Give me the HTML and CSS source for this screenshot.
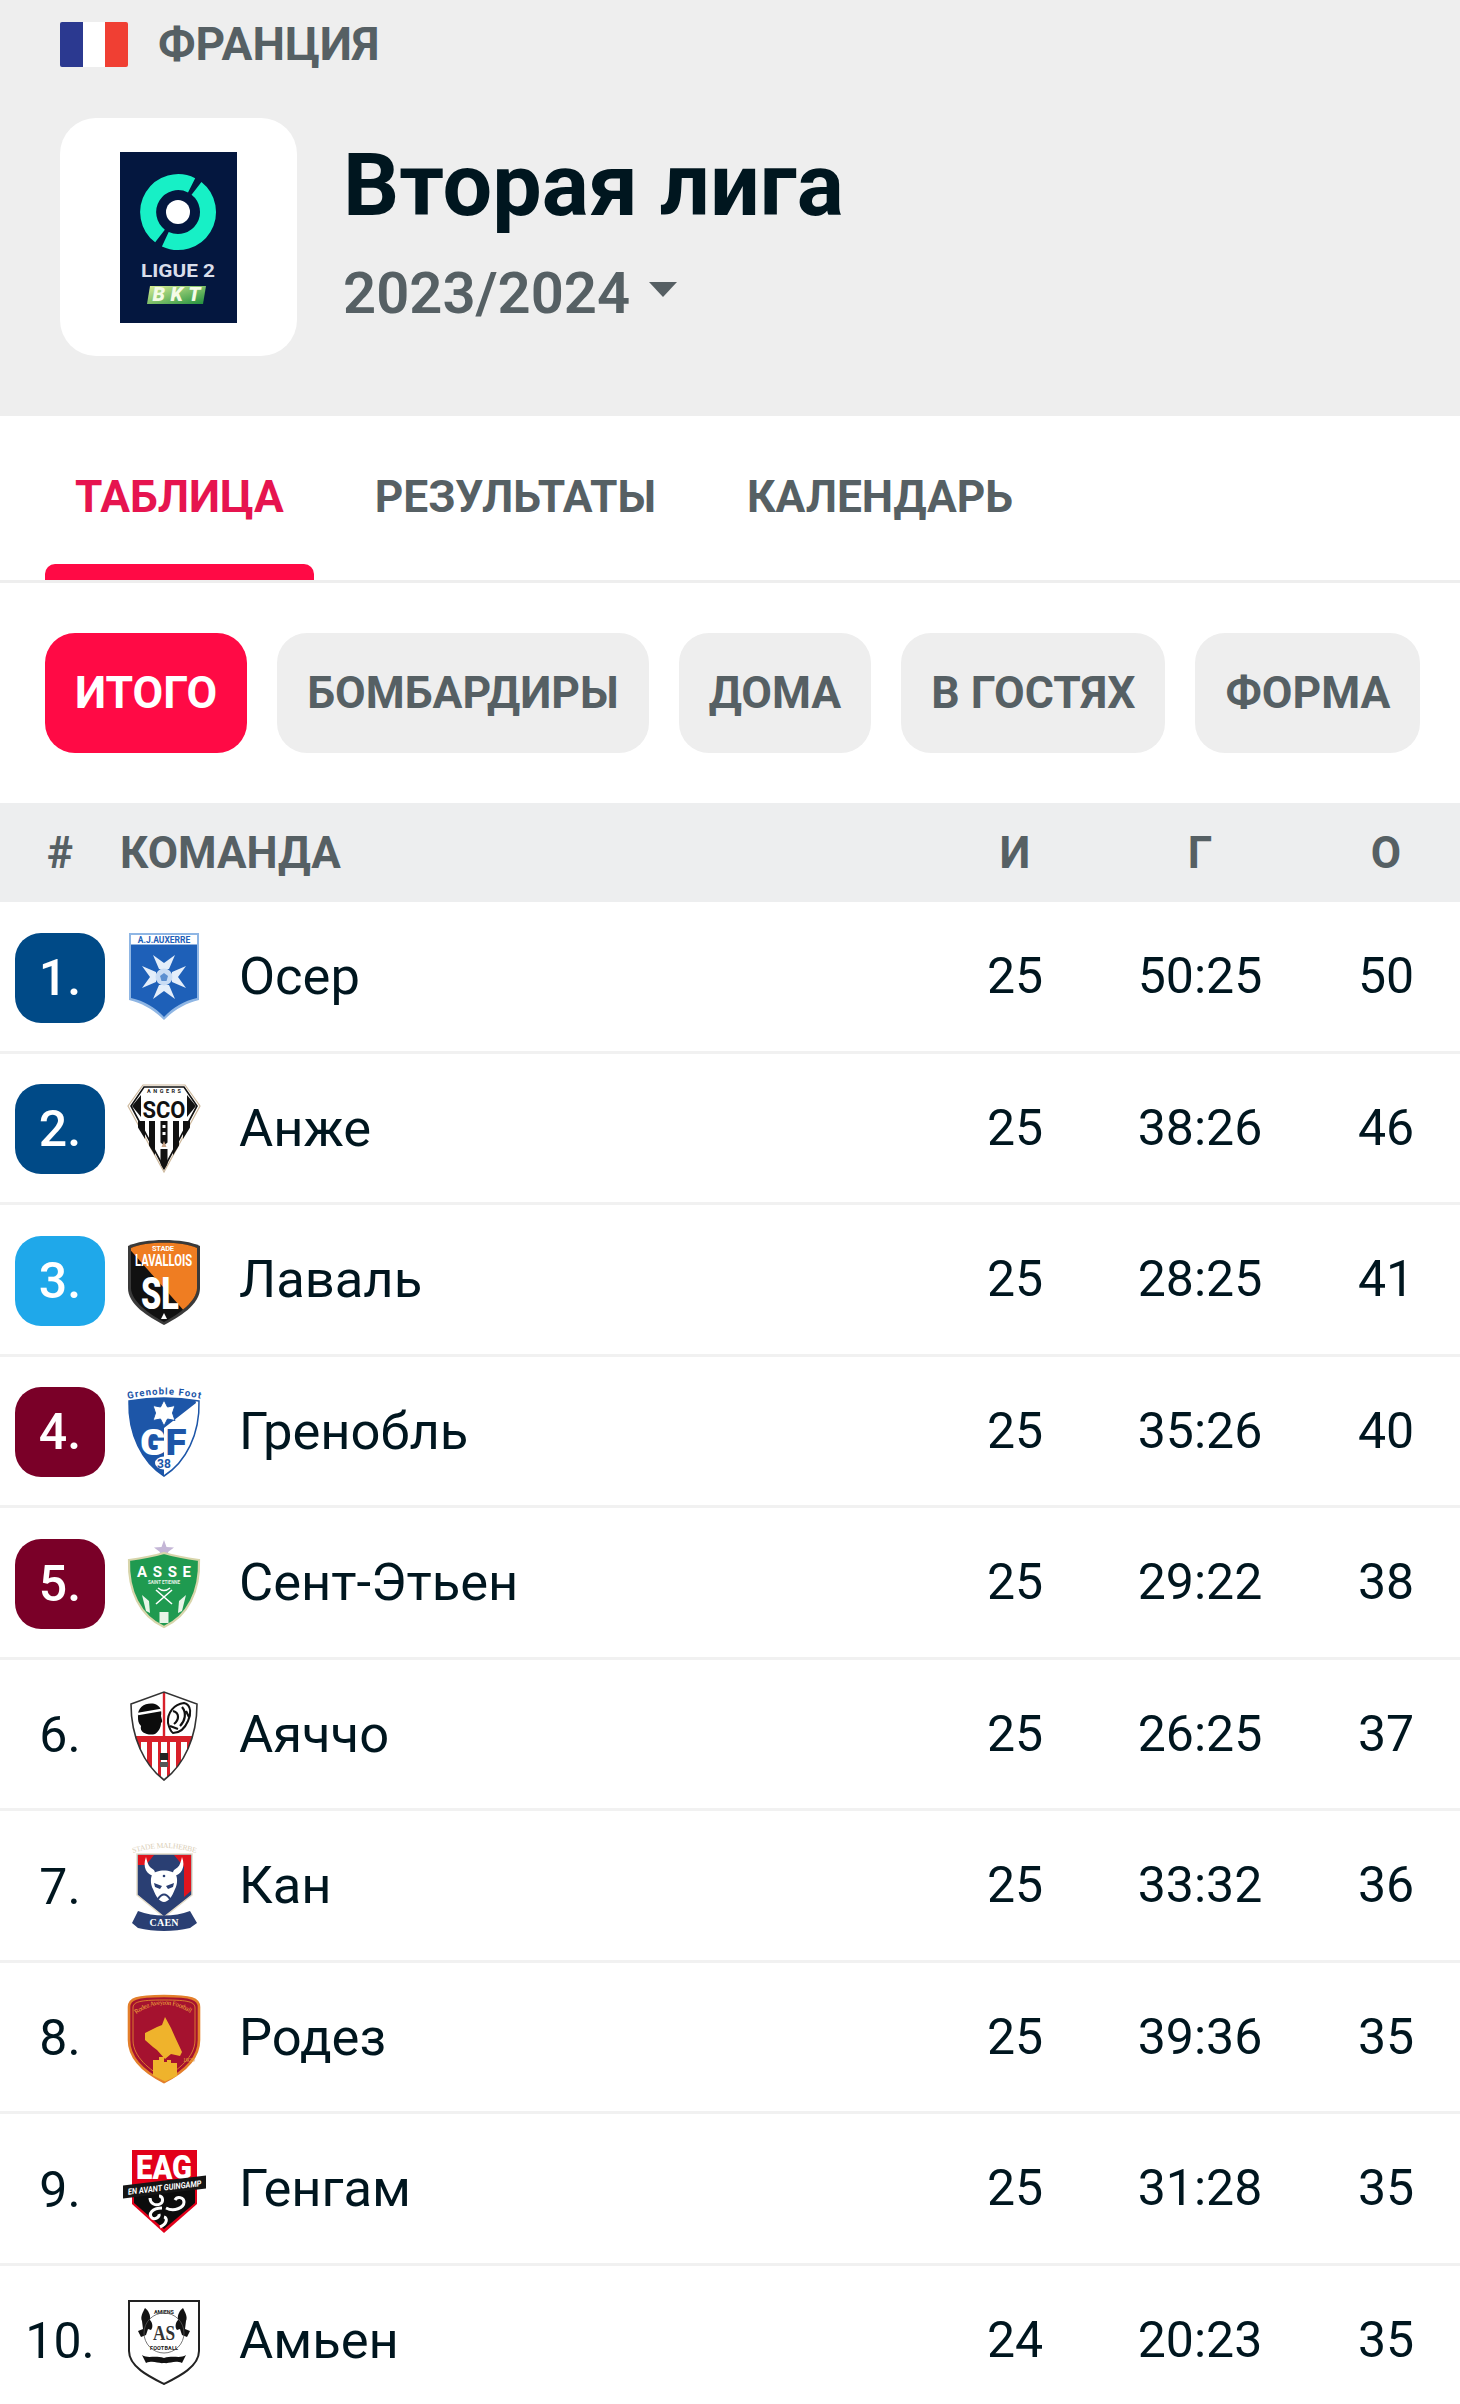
FILE: index.html
```html
<!DOCTYPE html>
<html lang="ru">
<head>
<meta charset="utf-8">
<title>Вторая лига</title>
<link rel="stylesheet" href="styles.css">
</head>
<body>
<div class="page">
  <header class="league">
    <div class="country">
      <div class="flag"><span class="flag-b"></span><span class="flag-w"></span><span class="flag-r"></span></div>
      <span class="country-name">ФРАНЦИЯ</span>
    </div>
    <div class="league-main">
      <div class="tile">
        <svg class="logo" viewBox="0 0 117 171" width="117" height="171">
          <defs><linearGradient id="bkt" x1="0" y1="0" x2="1" y2="1"><stop offset="0" stop-color="#dcef96"/><stop offset="1" stop-color="#1f8f3c"/></linearGradient></defs>
          <rect width="117" height="171" fill="#04173f"/>
          <path d="M71.6 33.3A30 30 0 0 0 40 84" fill="none" stroke="#17f0c6" stroke-width="16"/>
          <path d="M76.5 36.4A30 30 0 0 1 45.3 87.2" fill="none" stroke="#17f0c6" stroke-width="16"/>
          <circle cx="58" cy="60" r="12" fill="#fff"/>
          <text class="l2" x="58" y="125" text-anchor="middle" textLength="74" lengthAdjust="spacingAndGlyphs">LIGUE 2</text>
          <path d="M30 134H86L83 152H27Z" fill="url(#bkt)"/>
          <text class="bkt" x="56.5" y="149" text-anchor="middle" textLength="48">BKT</text>
        </svg>
      </div>
      <div class="league-text">
        <h1 class="title">Вторая лига</h1>
        <div class="season"><span>2023/2024</span>
          <svg class="caret" viewBox="0 0 28 15" width="28" height="15"><path d="M0 0H28L14 15Z" fill="#565f63"/></svg>
        </div>
      </div>
    </div>
  </header>

  <nav class="tabs">
    <div class="tab tab-active"><span class="tab-label">ТАБЛИЦА</span></div>
    <div class="tab"><span class="tab-label">РЕЗУЛЬТАТЫ</span></div>
    <div class="tab"><span class="tab-label">КАЛЕНДАРЬ</span></div>
  </nav>

  <div class="pills">
    <div class="pill pill-active">ИТОГО</div>
    <div class="pill">БОМБАРДИРЫ</div>
    <div class="pill">ДОМА</div>
    <div class="pill">В ГОСТЯХ</div>
    <div class="pill">ФОРМА</div>
  </div>

  <div class="thead">
    <div class="th-rank">#</div>
    <div class="th-team">КОМАНДА</div>
    <div class="col-p">И</div>
    <div class="col-g">Г</div>
    <div class="col-o">О</div>
  </div>

  <div class="row">
    <div class="rank rank-blue">1.</div>
    <svg class="crest" viewBox="-4 0 88 96" width="88" height="96">
      <path d="M5 3H75V70C62 73 50 80 40 90C30 80 18 73 5 70Z" fill="#8fb6e4"/>
      <path d="M7 14H73V68C60 71 49 77 40 87C31 77 20 71 7 68Z" fill="#1e60b8"/>
      <rect x="7" y="5" width="66" height="9.5" fill="#fff"/>
      <text class="c-bold" x="40" y="13" font-size="8.5" fill="#1e60b8" text-anchor="middle">A.J.AUXERRE</text>
      <g fill="#e4eefa">
        <path d="M29 25L40 33L51 25L45 39H35Z"/>
        <path d="M29 25L40 33L51 25L45 39H35Z" transform="rotate(90 40 47)"/>
        <path d="M29 25L40 33L51 25L45 39H35Z" transform="rotate(180 40 47)"/>
        <path d="M29 25L40 33L51 25L45 39H35Z" transform="rotate(270 40 47)"/>
      </g>
      <circle cx="40" cy="47" r="8.5" fill="#c9dcf4"/>
      <path d="M40 43L44 46L42.5 51H37.5L36 46Z" fill="#5c8fd0"/>
    </svg>
    <div class="name">Осер</div>
    <div class="col-p">25</div><div class="col-g">50:25</div><div class="col-o">50</div>
  </div>

  <div class="row">
    <div class="rank rank-blue">2.</div>
    <svg class="crest" viewBox="-4 0 88 96" width="88" height="96">
      <defs><clipPath id="sco"><path d="M10 40H70L40 89Z"/></clipPath></defs>
      <path d="M19 4H61L76 25L40 91L4 25Z" fill="#fff" stroke="#cdb89c" stroke-width="1.2"/>
      <path d="M20 6H60L73 25L40 87L7 25Z" fill="none" stroke="#111" stroke-width="1.6"/>
      <path d="M8 25L17 14V36Z" fill="#111"/><path d="M72 25L63 14V36Z" fill="#111"/>
      <text class="c-bold" x="40" y="11.5" font-size="5.5" fill="#222" text-anchor="middle" textLength="34">ANGERS</text>
      <text class="c-bold" x="40" y="37" font-size="24" fill="#111" text-anchor="middle" textLength="43" lengthAdjust="spacingAndGlyphs">SCO</text>
      <g clip-path="url(#sco)" fill="#111">
        <rect x="14" y="40" width="7" height="50"/><rect x="25" y="40" width="6" height="50"/>
        <rect x="36.5" y="40" width="7" height="50"/><rect x="49" y="40" width="6" height="50"/><rect x="59" y="40" width="7" height="50"/>
      </g>
      <rect x="38.5" y="44" width="3" height="3" fill="#fff"/><rect x="38.5" y="51" width="3" height="3" fill="#fff"/>
      <path d="M34 60L36 68H44L46 60L40 64Z" fill="#fff"/>
      <path d="M40 60L42.5 66H37.5Z" fill="#c9a58a"/>
    </svg>
    <div class="name">Анже</div>
    <div class="col-p">25</div><div class="col-g">38:26</div><div class="col-o">46</div>
  </div>

  <div class="row">
    <div class="rank rank-sky">3.</div>
    <svg class="crest" viewBox="-4 0 88 96" width="88" height="96">
      <defs><clipPath id="lav"><path d="M7 15C22 8 58 8 73 15V55C73 68 55 81 40 89C25 81 7 68 7 55Z"/></clipPath></defs>
      <path d="M4 13C20 5 60 5 76 13V55C76 72 55 84 40 92C25 84 4 72 4 55Z" fill="#3a3a3a"/>
      <path d="M7 15C22 8 58 8 73 15V55C73 68 55 81 40 89C25 81 7 68 7 55Z" fill="#111"/>
      <g clip-path="url(#lav)">
        <path d="M2 5H80V80H62L2 12Z" fill="#ef7d22"/>
      </g>
      <text class="c-bold" x="39" y="18" font-size="7.5" fill="#fff" text-anchor="middle" textLength="22">STADE</text>
      <text class="c-bold" x="39.5" y="33" font-size="17" fill="#fff" text-anchor="middle" textLength="57" lengthAdjust="spacingAndGlyphs">LAVALLOIS</text>
      <text class="c-black" x="36" y="76" font-size="45" fill="#fff" text-anchor="middle" textLength="38" lengthAdjust="spacingAndGlyphs">SL</text>
      <path d="M40 80L43 86H37Z" fill="#fff"/>
    </svg>
    <div class="name">Лаваль</div>
    <div class="col-p">25</div><div class="col-g">28:25</div><div class="col-o">41</div>
  </div>

  <div class="row">
    <div class="rank rank-wine">4.</div>
    <svg class="crest" viewBox="-4 0 88 96" width="88" height="96">
      <defs>
        <clipPath id="gre"><path d="M5 17C28 13 52 13 75 17C76 50 62 78 40 92C18 78 4 50 5 17Z"/></clipPath>
        <path id="gre-arc" d="M4 15Q40 6 77 15"/>
      </defs>
      <text class="c-bold" font-size="9.5" fill="#1d56a8" textLength="73"><textPath href="#gre-arc">Grenoble Foot</textPath></text>
      <path d="M5 17C28 13 52 13 75 17C76 50 62 78 40 92C18 78 4 50 5 17Z" fill="#fff" stroke="#1d56a8" stroke-width="1.5"/>
      <path d="M0 14H71L72 19L40 44V95H0Z" fill="#1d56a8" clip-path="url(#gre)"/>
      <path d="M40 16L43.5 23L51 21.5L48.5 29L51 36.5L43.5 35L40 42L36.5 35L29 36.5L31.5 29L29 21.5L36.5 23Z" fill="#fff" stroke="#1d56a8" stroke-width="1"/>
      <text class="c-black" x="29" y="71" font-size="36" fill="#fff" text-anchor="middle" textLength="26" lengthAdjust="spacingAndGlyphs">G</text>
      <text class="c-black" x="52" y="71" font-size="36" fill="#1d56a8" text-anchor="middle" textLength="21" lengthAdjust="spacingAndGlyphs">F</text>
      <ellipse cx="40" cy="79" rx="9" ry="6.5" fill="#fff"/>
      <text class="c-bold" x="40" y="83.5" font-size="12" fill="#1d56a8" text-anchor="middle">38</text>
    </svg>
    <div class="name">Гренобль</div>
    <div class="col-p">25</div><div class="col-g">35:26</div><div class="col-o">40</div>
  </div>

  <div class="row">
    <div class="rank rank-wine">5.</div>
    <svg class="crest" viewBox="-4 0 88 96" width="88" height="96">
      <path d="M40 4L42.5 11L50 11.5L44 16L46 23L40 19L34 23L36 16L30 11.5L37.5 11Z" fill="#c4b6d6"/>
      <path d="M5 24C20 22 30 20 40 17C50 20 60 22 75 24C76 55 64 80 40 91C16 80 4 55 5 24Z" fill="#1f9a50" stroke="#d8d5ab" stroke-width="2.2"/>
      <text class="c-bold" x="40" y="41" font-size="15" fill="#fff" text-anchor="middle" textLength="54">ASSE</text>
      <text class="c-bold" x="40" y="48" font-size="4.5" fill="#e4f3e6" text-anchor="middle" textLength="32">SAINT ETIENNE</text>
      <path d="M32 54L48 68M48 54L32 68" stroke="#fff" stroke-width="1.6"/>
      <path d="M34 52Q40 57 46 52" stroke="#fff" stroke-width="1.5" fill="none"/>
      <path d="M18 59L25 65L26 77L22 75Z" fill="#e8f5e8"/><path d="M62 59L55 65L54 77L58 75Z" fill="#e8f5e8"/>
      <rect x="35.5" y="76" width="9" height="11" fill="#e8f5e8"/>
    </svg>
    <div class="name">Сент-Этьен</div>
    <div class="col-p">25</div><div class="col-g">29:22</div><div class="col-o">38</div>
  </div>

  <div class="row">
    <div class="rank">6.</div>
    <svg class="crest" viewBox="-4 0 88 96" width="88" height="96">
      <defs><clipPath id="aja"><path d="M7 17L40 5L73 17C73 50 60 78 40 93C20 78 7 50 7 17Z"/></clipPath></defs>
      <path d="M7 17L40 5L73 17C73 50 60 78 40 93C20 78 7 50 7 17Z" fill="#fff"/>
      <g clip-path="url(#aja)">
        <rect x="0" y="49" width="80" height="6" fill="#d8202a"/>
        <path d="M12 55h5v40h-5zM23 55h5v40h-5zM34 55h3v40h-3zM43 55h3v40h-3zM52 55h5v40h-5zM63 55h5v40h-5z" fill="#d8202a"/>
        <rect x="38.8" y="4" width="2.4" height="46" fill="#d8202a"/>
      </g>
      <path d="M7 17L40 5L73 17C73 50 60 78 40 93C20 78 7 50 7 17Z" fill="none" stroke="#333" stroke-width="1.6"/>
      <path d="M14 30C13 19 23 15 31 17C37 19 38 25 37 29C38 33 39 35 37 36C37 41 34 45 31 47C25 49 15 46 17 39C14 36 14 33 14 30Z" fill="#0c0c0c"/>
      <path d="M14 27L37 23" stroke="#fff" stroke-width="2.4"/>
      <path d="M44 36C43 26 50 17 60 16C68 18 67 28 64 34C61 41 56 46 49 46C46 44 45 40 44 36Z" fill="#fff" stroke="#111" stroke-width="2"/>
      <path d="M49 24C56 26 55 33 50 37M58 20C63 26 61 34 56 39M46 39L54 42M62 24L65 30" stroke="#111" stroke-width="2.2" fill="none"/>
      <rect x="36" y="66" width="8" height="7" fill="#222"/><rect x="36" y="75" width="8" height="5" fill="#555"/>
    </svg>
    <div class="name">Аяччо</div>
    <div class="col-p">25</div><div class="col-g">26:25</div><div class="col-o">37</div>
  </div>

  <div class="row">
    <div class="rank">7.</div>
    <svg class="crest" viewBox="-4 0 88 96" width="88" height="96">
      <defs><path id="caen-arc" d="M9 14Q40 4 72 14"/></defs>
      <text class="c-serif" font-size="7.5" fill="#d9cdb4" textLength="64"><textPath href="#caen-arc">STADE MALHERBE</textPath></text>
      <path d="M13 15H68V56L40 78L13 56Z" fill="#2a3f73" stroke="#e4dcc8" stroke-width="1.5"/>
      <path d="M14 16H67V52L60 58V28L50 16H30L22 26H14Z" fill="#e0141e"/>
      <path d="M22 18C18 28 23 36 30 37C33 31 28 30 26 28C24 26 23 22 22 18ZM58 18C62 28 57 36 50 37C47 31 52 30 54 28C56 26 57 22 58 18Z" fill="#fff"/>
      <path d="M28 36C31 30 49 30 52 36C54 40 53 47 51 50C48 58 44 63 40 63C36 63 32 58 29 50C27 47 26 40 28 36Z" fill="#fff"/>
      <path d="M30 44L38 47L36 50L31 48ZM50 44L42 47L44 50L49 48Z" fill="#2a3f73"/>
      <path d="M34 60Q40 51 46 60" stroke="#2a3f73" stroke-width="2" fill="none"/>
      <circle cx="40" cy="37" r="1.3" fill="#2a3f73"/>
      <path d="M8 84L14 72C30 78 50 78 66 72L73 84L66 89C50 93 30 93 14 89Z" fill="#2a3f73"/>
      <text class="c-serif-b" x="40" y="87" font-size="10" fill="#fff" text-anchor="middle" textLength="29">CAEN</text>
    </svg>
    <div class="name">Кан</div>
    <div class="col-p">25</div><div class="col-g">33:32</div><div class="col-o">36</div>
  </div>

  <div class="row">
    <div class="rank">8.</div>
    <svg class="crest" viewBox="-4 0 88 96" width="88" height="96">
      <defs><path id="rod-arc" d="M12 24Q40 5 68 24"/></defs>
      <path d="M5 17C5 9 12 6 40 6C68 6 75 9 75 17V50C75 70 56 84 40 92C24 84 5 70 5 50Z" fill="#a5122f" stroke="#e37f2b" stroke-width="2.6"/>
      <path d="M9 18C9 12 15 10 40 10C65 10 71 12 71 18V50C71 67 54 80 40 88C26 80 9 67 9 50Z" fill="none" stroke="#e8932f" stroke-width="0.8"/>
      <text class="c-serif" font-size="6.5" fill="#f4b33c" textLength="58"><textPath href="#rod-arc">Rodez Aveyron Football</textPath></text>
      <path d="M41 27L47 38L51 47L58 62L56 66L47 64L41 69L33 60L29 57L21 50L21 43L33 37L38 35Z" fill="#efb32c"/>
      <path d="M29 70h6v-3h5v5h3v-2h4v3h6v13l-12 5.5l-12 -6Z" fill="#efb32c"/>
      <text class="c-serif" x="59" y="72" font-size="6" fill="#e9a83a">1929</text>
    </svg>
    <div class="name">Родез</div>
    <div class="col-p">25</div><div class="col-g">39:36</div><div class="col-o">35</div>
  </div>

  <div class="row">
    <div class="rank">9.</div>
    <svg class="crest" viewBox="-4 0 88 96" width="88" height="96">
      <path d="M8 8H73V62L40 91L8 62Z" fill="#e2001a"/>
      <path d="M10 48H71V61L40 87L10 61Z" fill="#0c0c0c"/>
      <text class="c-black" x="40" y="37" font-size="33" fill="#fff" text-anchor="middle" textLength="56" lengthAdjust="spacingAndGlyphs">EAG</text>
      <path d="M-1 43.5L82 33.5V46.5L-1 56.5Z" fill="#151515"/>
      <text class="c-bold" x="40.5" y="48.5" font-size="8.5" font-style="italic" fill="#fff" text-anchor="middle" textLength="74" lengthAdjust="spacingAndGlyphs" transform="rotate(-6.8 40.5 45)">EN AVANT GUINGAMP</text>
      <g fill="none" stroke="#fff" stroke-width="3">
        <path d="M26 56C26 62 32 64 36 62C40 60 39 54 35 54"/>
        <path d="M42 66C50 70 60 66 60 60C60 55 53 54 51 58"/>
        <path d="M38 66C28 66 24 72 28 76C31 78 36 75 35 72"/>
        <path d="M36 85C43 82 44 76 40 75"/>
      </g>
    </svg>
    <div class="name">Генгам</div>
    <div class="col-p">25</div><div class="col-g">31:28</div><div class="col-o">35</div>
  </div>

  <div class="row">
    <div class="rank rank-ten">10.</div>
    <svg class="crest" viewBox="-4 0 88 96" width="88" height="96">
      <path d="M5 8H75V58C75 74 54 84 40 91C26 84 5 74 5 58Z" fill="#fff" stroke="#222" stroke-width="2"/>
      <text class="c-bold" x="40" y="21" font-size="5.5" fill="#222" text-anchor="middle" textLength="20">AMIENS</text>
      <path d="M21 15C24 17 27 22 26 27C29 30 29 35 27 37L24 36L22 42L17 44L14 38L19 36L18 28C16 24 19 19 21 15Z" fill="#111"/>
      <path d="M59 15C56 17 53 22 54 27C51 30 51 35 53 37L56 36L58 42L63 44L66 38L61 36L62 28C64 24 61 19 59 15Z" fill="#111"/>
      <circle cx="40" cy="40" r="20" fill="none" stroke="#555" stroke-width="0.8"/>
      <text class="c-serif-b" x="40" y="47" font-size="22" fill="#333" text-anchor="middle" textLength="22" lengthAdjust="spacingAndGlyphs">AS</text>
      <text class="c-bold" x="40" y="57" font-size="5.5" fill="#222" text-anchor="middle" textLength="28">FOOTBALL</text>
      <path d="M18 62C24 66 30 62 40 65C50 62 56 66 62 62L58 70C50 67 46 71 40 70C34 71 30 67 22 70Z" fill="#111"/>
    </svg>
    <div class="name">Амьен</div>
    <div class="col-p">24</div><div class="col-g">20:23</div><div class="col-o">35</div>
  </div>
</div>
</body>
</html>
```
FILE: styles.css
```css
* { box-sizing: border-box; }
html, body { margin: 0; padding: 0; background: #fff; }
body { font-family: Roboto, "Noto Sans", sans-serif; color: #00161f; }
.page { width: 1460px; height: 2404px; overflow: hidden; }

.league { height: 416px; background: #eeeeee; padding: 21px 60px 0; }
.country { display: flex; align-items: center; gap: 30px; height: 46px; }
.flag { display: flex; width: 68px; height: 45px; border-radius: 2px; overflow: hidden; }
.flag span { flex: 1; }
.flag-b { background: #2b3990; }
.flag-w { background: #ffffff; }
.flag-r { background: #f03f33; }
.country-name { font-size: 46px; font-weight: 700; color: #566064; line-height: 46px; }
.league-main { display: flex; gap: 46px; margin-top: 51px; }
.tile { width: 237px; height: 238px; border-radius: 36px; background: #fff; display: flex; align-items: center; justify-content: center; }
.logo { display: block; }
.l2 { font-family: Roboto, sans-serif; font-weight: 700; font-size: 19px; fill: #d9deea; }
.bkt { font-family: Roboto, sans-serif; font-weight: 900; font-size: 20px; font-style: italic; fill: #f4fbe6; }
.league-text { padding-top: 17px; }
.title { margin: 0; font-size: 88px; line-height: 100px; font-weight: 700; color: #00161f; }
.season { display: flex; align-items: center; gap: 19px; margin-top: 28px; font-size: 58px; line-height: 60px; font-weight: 600; color: #566064; }
.caret { display: block; margin-top: -8px; }

.tabs { display: flex; gap: 31px; height: 167px; padding-left: 45px; border-bottom: 3px solid #eeeeee; }
.tab { display: flex; flex-direction: column; padding: 0 30px; }
.tab-label { flex: 1; display: flex; align-items: center; padding-top: 14px; font-size: 44.3px; font-weight: 700; color: #566064; }
.tab::after { content: ""; display: block; height: 16px; margin: 0 -30px; border-radius: 10px 10px 0 0; background: transparent; }
.tab-active .tab-label { color: #e6144f; }
.tab-active::after { background: #ff0a45; }

.pills { display: flex; gap: 30px; padding: 50px 0 50px 45px; }
.pill { height: 120px; padding: 0 30px; display: flex; align-items: center; border-radius: 30px; background: #eeeeee; font-size: 44.5px; font-weight: 700; color: #566064; white-space: nowrap; }
.pill-active { background: #ff0a45; color: #fff; }

.thead, .row { display: grid; grid-template-columns: 90px 135px 1fr 155px 216px 120px; align-items: center; padding: 0 14px 0 15px; }
.thead { height: 99px; background: #edeeef; font-size: 44px; font-weight: 700; color: #566064; }
.th-rank { text-align: center; }
.th-team { grid-column: 2 / 4; padding-left: 15px; }
.col-p, .col-g, .col-o { text-align: center; }
.col-p { margin-right: 35px; }
.col-g { margin-right: 36px; }

.row { height: 151.5px; border-bottom: 3px solid #f1f1f1; font-size: 50px; line-height: 60px; color: #00161f; }
.rank { width: 90px; height: 90px; margin-top: 3px; border-radius: 26px; display: flex; align-items: center; justify-content: center; font-size: 50px; }
.rank-blue { background: #004a87; color: #fff; font-weight: 500; }
.rank-sky { background: #1fa8ea; color: #fff; font-weight: 500; }
.rank-wine { background: #7a0028; color: #fff; font-weight: 500; }
.crest { display: block; margin: 3px 0 0 15px; overflow: visible; }
.c-bold { font-family: Roboto, sans-serif; font-weight: 700; }
.c-black { font-family: Roboto, sans-serif; font-weight: 900; }
.c-serif { font-family: "Liberation Serif", serif; }
.c-serif-b { font-family: "Liberation Serif", serif; font-weight: 700; }
.name { margin-left: -1px; font-size: 52.5px; white-space: nowrap; }
```
